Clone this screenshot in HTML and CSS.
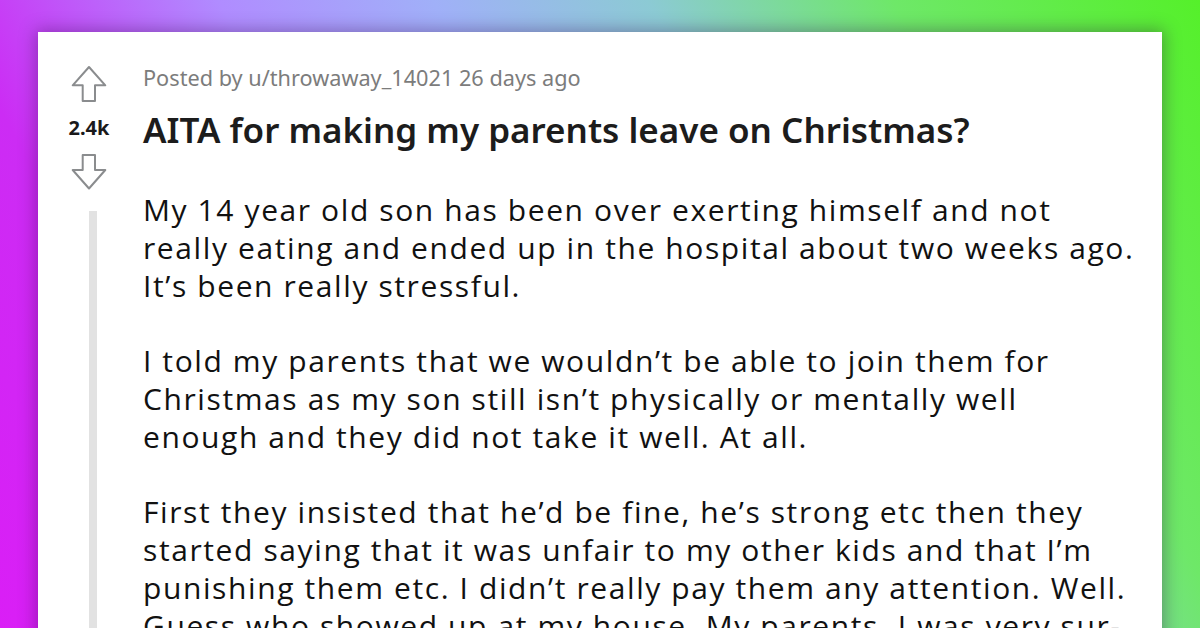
FILE: index.html
```html
<!DOCTYPE html>
<html lang="en">
<head>
<meta charset="utf-8">
<title>AITA for making my parents leave on Christmas?</title>
<link rel="stylesheet" href="styles.css">
</head>
<body>
<div class="stage">
  <article class="card">
    <aside class="votes">
      <svg class="arrow" width="40" height="38" viewBox="0 0 40 38" aria-label="upvote">
        <polygon points="20,2 36.3,20.3 26,20.3 26,36 13.7,36 13.7,20.3 3.7,20.3" />
      </svg>
      <div class="score">2.4k</div>
      <svg class="arrow down" width="40" height="38" viewBox="0 0 40 38" aria-label="downvote">
        <polygon points="13.7,2 26,2 26,17 36.3,17 20,35.5 3.7,17 13.7,17" />
      </svg>
      <div class="thread-line"></div>
    </aside>
    <div class="content">
      <div class="meta">Posted by u/throwaway_14021 26 days ago</div>
      <h1 class="title">AITA for making my parents leave on Christmas?</h1>
      <div class="body">
        <p>My 14 year old son has been over exerting himself and not<br>really eating and ended up in the hospital about two weeks ago.<br>It’s been really stressful.</p>
        <p>I told my parents that we wouldn’t be able to join them for<br>Christmas as my son still isn’t physically or mentally well<br>enough and they did not take it well. At all.</p>
        <p>First they insisted that he’d be fine, he’s strong etc then they<br>started saying that it was unfair to my other kids and that I’m<br>punishing them etc. I didn’t really pay them any attention. Well.<br>Guess who showed up at my house. My parents. I was very sur-</p>
      </div>
    </div>
  </article>
</div>
</body>
</html>
```

FILE: styles.css
```css
html, body {
  margin: 0;
  padding: 0;
}

body {
  width: 1200px;
  height: 628px;
  overflow: hidden;
}

.stage {
  width: 1200px;
  height: 628px;
  box-sizing: border-box;
  padding: 32px 38px 0;
  background: linear-gradient(62deg, #da1ef6 0%, #cc2cf4 18%, #b08cff 36%, #a0b0f8 50%, #8ccad4 64%, #6ee868 80%, #55f02a 100%);
  overflow: hidden;
}

.card {
  background: #ffffff;
  height: 700px;
  display: flex;
  box-shadow: 0 0 16px 2px rgba(40, 0, 60, 0.35);
}

.votes {
  width: 102px;
  flex: none;
  display: flex;
  flex-direction: column;
  align-items: center;
  padding-top: 33px;
  box-sizing: border-box;
}

.arrow {
  display: block;
}

.arrow polygon {
  fill: none;
  stroke: #8a8c8e;
  stroke-width: 2;
  stroke-linejoin: round;
}

.score {
  font-family: "Noto Sans", "Open Sans", sans-serif;
  font-weight: 700;
  font-size: 20px;
  line-height: 22px;
  color: #1a1a1b;
  margin-top: 14px;
  margin-bottom: 14px;
}

.thread-line {
  align-self: flex-start;
  margin-left: 51px;
  margin-top: 20px;
  width: 8px;
  flex: 1;
  background: #e2e2e2;
}

.content {
  margin-left: 3px;
  padding-top: 32px;
  flex: 1;
}

.meta {
  font-family: "Noto Sans", "Open Sans", sans-serif;
  font-size: 21.7px;
  line-height: 28px;
  color: #7c7c7c;
}

.title {
  margin: 18px 0 0;
  font-family: "Noto Sans", "Open Sans", sans-serif;
  font-weight: 600;
  font-size: 35px;
  line-height: 40px;
  color: #1c1c1c;
}

.body {
  margin-top: 41px;
  font-family: "Open Sans", "Noto Sans", sans-serif;
  font-size: 30px;
  line-height: 38px;
  letter-spacing: 1.6px;
  color: #111111;
  white-space: nowrap;
}

.body p {
  margin: 0 0 37px;
}
```
